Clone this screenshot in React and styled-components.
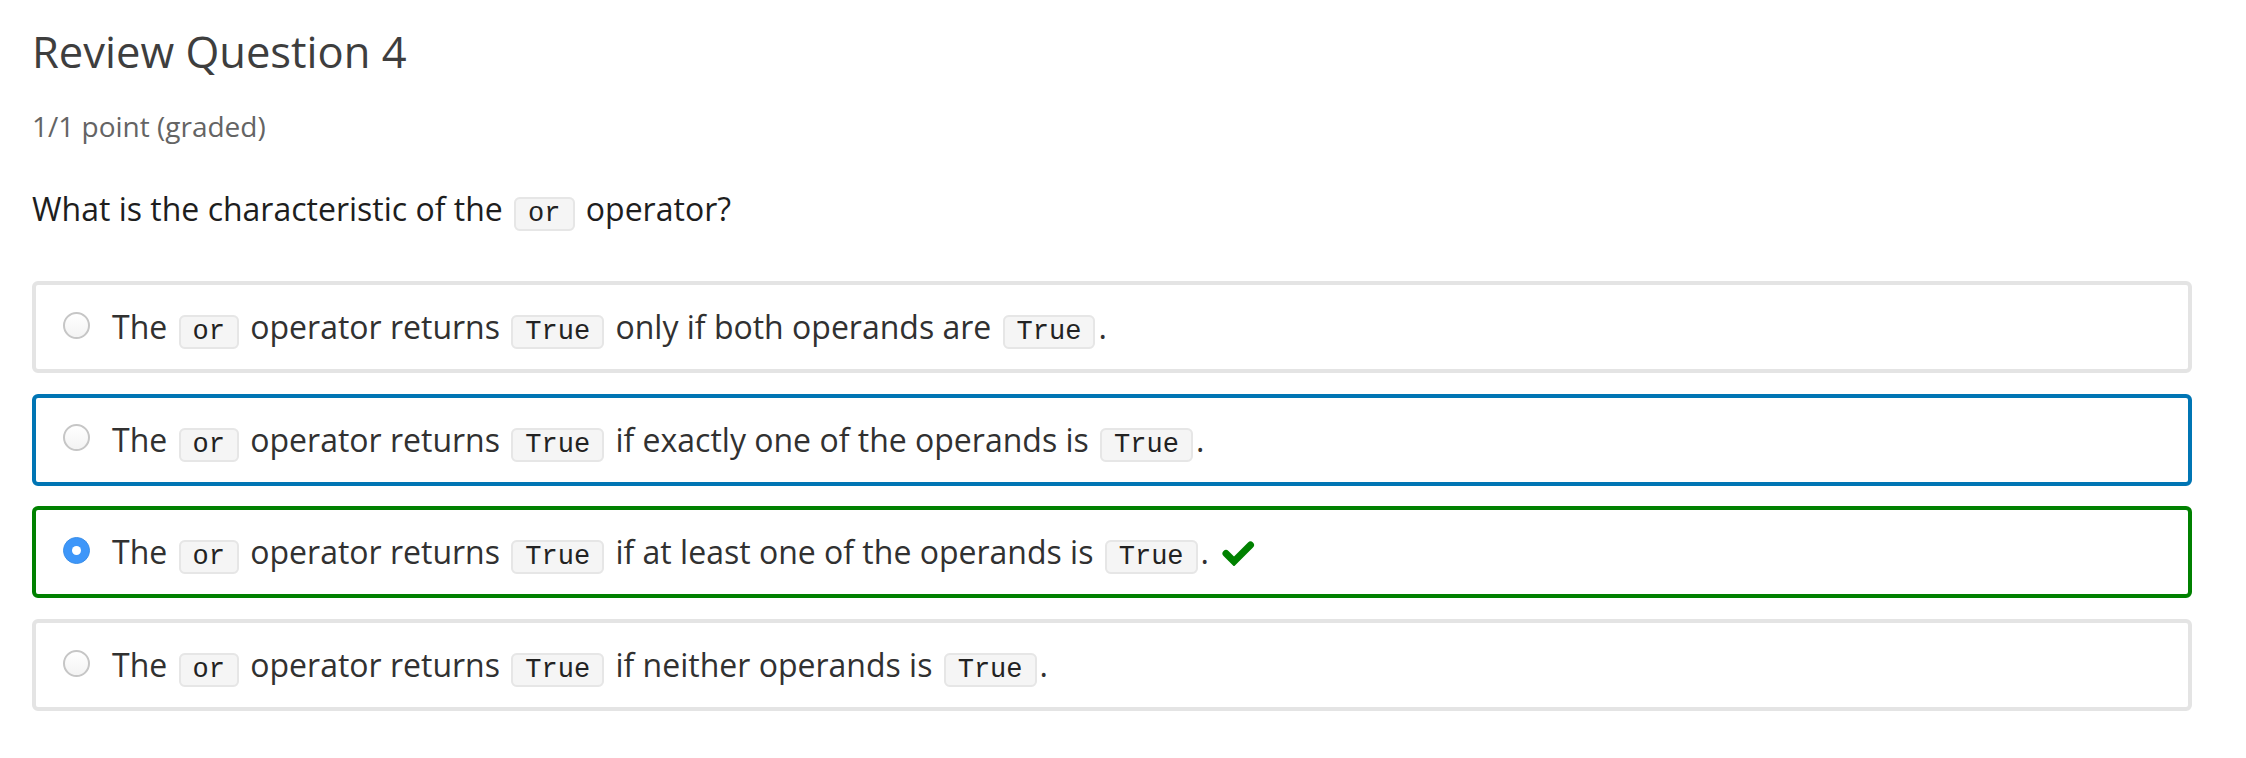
import styled, { createGlobalStyle } from 'styled-components';

const GlobalStyle = createGlobalStyle`
  body {
    margin: 0;
    background: #ffffff;
    font-family: "Open Sans", "Noto Sans", sans-serif;
  }
`;

const options = [
  { id: 1, state: 'idle', parts: ['The ', { code: 'or' }, ' operator returns ', { code: 'True' }, ' only if both operands are ', { code: 'True' }, '.'] },
  { id: 2, state: 'focus', parts: ['The ', { code: 'or' }, ' operator returns ', { code: 'True' }, ' if exactly one of the operands is ', { code: 'True' }, '.'] },
  { id: 3, state: 'correct', parts: ['The ', { code: 'or' }, ' operator returns ', { code: 'True' }, ' if at least one of the operands is ', { code: 'True' }, '.'] },
  { id: 4, state: 'idle', parts: ['The ', { code: 'or' }, ' operator returns ', { code: 'True' }, ' if neither operands is ', { code: 'True' }, '.'] },
];

const borderColors = {
  idle: '#e4e4e4',
  focus: '#0075b4',
  correct: '#008100',
};

const CheckIcon = () => (
  <CheckSvg viewBox="0 0 34 26">
    <path
      d="M5 13.5 L13 21.5 L29.5 5"
      fill="none"
      stroke="#008100"
      strokeWidth="7"
      strokeLinecap="round"
      strokeLinejoin="miter"
    />
  </CheckSvg>
);

const App = () => {
  return (
    <Page>
      <GlobalStyle />
      <Title>Review Question 4</Title>
      <Points>1/1 point (graded)</Points>
      <Question>
        What is the characteristic of the <Code>or</Code> operator?
      </Question>
      <OptionList>
        {options.map((opt) => (
          <Option key={opt.id} $state={opt.state}>
            <Radio $checked={opt.state === 'correct'} />
            <Label>
              {opt.parts.map((p, i) =>
                typeof p === 'string' ? <span key={i}>{p}</span> : <Code key={i}>{p.code}</Code>
              )}
              {opt.state === 'correct' && <CheckIcon />}
            </Label>
          </Option>
        ))}
      </OptionList>
    </Page>
  );
};

export default App;

const Page = styled.div`
  padding: 24px 54px 40px 32px;
`;

const Title = styled.h2`
  margin: 0;
  font-size: 43.5px;
  line-height: 55px;
  font-weight: 400;
  color: #3e3e3e;
`;

const Points = styled.div`
  margin-top: 26px;
  font-size: 28px;
  line-height: 42px;
  color: #646464;
`;

const Question = styled.p`
  margin: 38px 0 0;
  font-size: 32px;
  line-height: 48px;
  color: #1e1e1e;
`;

const Code = styled.code`
  font-family: "Liberation Mono", "Courier New", monospace;
  font-size: 27px;
  color: #222;
  background: #f5f5f5;
  border: 2px solid #e6e6e6;
  border-radius: 6px;
  padding: 0 12px;
  margin: 0 3px;
`;

const OptionList = styled.div`
  margin-top: 43px;
  display: flex;
  flex-direction: column;
  gap: 20.7px;
`;

const Option = styled.label`
  box-sizing: border-box;
  height: 92px;
  display: flex;
  align-items: center;
  gap: 22px;
  padding: 0 27px;
  border: 4px solid ${({ $state }) => borderColors[$state]};
  border-radius: 6px;
  background: #fff;
`;

const Radio = styled.span`
  box-sizing: border-box;
  flex: none;
  width: 27px;
  height: 27px;
  margin-bottom: 4px;
  border-radius: 50%;
  position: relative;
  ${({ $checked }) =>
    $checked
      ? `
    background: #3d96f9;
    border: 1px solid #3a8ee8;
    &::after {
      content: '';
      position: absolute;
      left: 50%;
      top: 50%;
      width: 9px;
      height: 9px;
      margin: -4.5px 0 0 -4.5px;
      border-radius: 50%;
      background: #fff;
    }
  `
      : `
    background: linear-gradient(#ffffff, #f3f3f3);
    border: 2px solid #c6c6c6;
  `}
`;

const Label = styled.span`
  padding-top: 5px;
  font-size: 32px;
  line-height: 48px;
  color: #313131;
`;

const CheckSvg = styled.svg`
  width: 34px;
  height: 26px;
  margin-left: 12px;
  vertical-align: -2px;
`;
